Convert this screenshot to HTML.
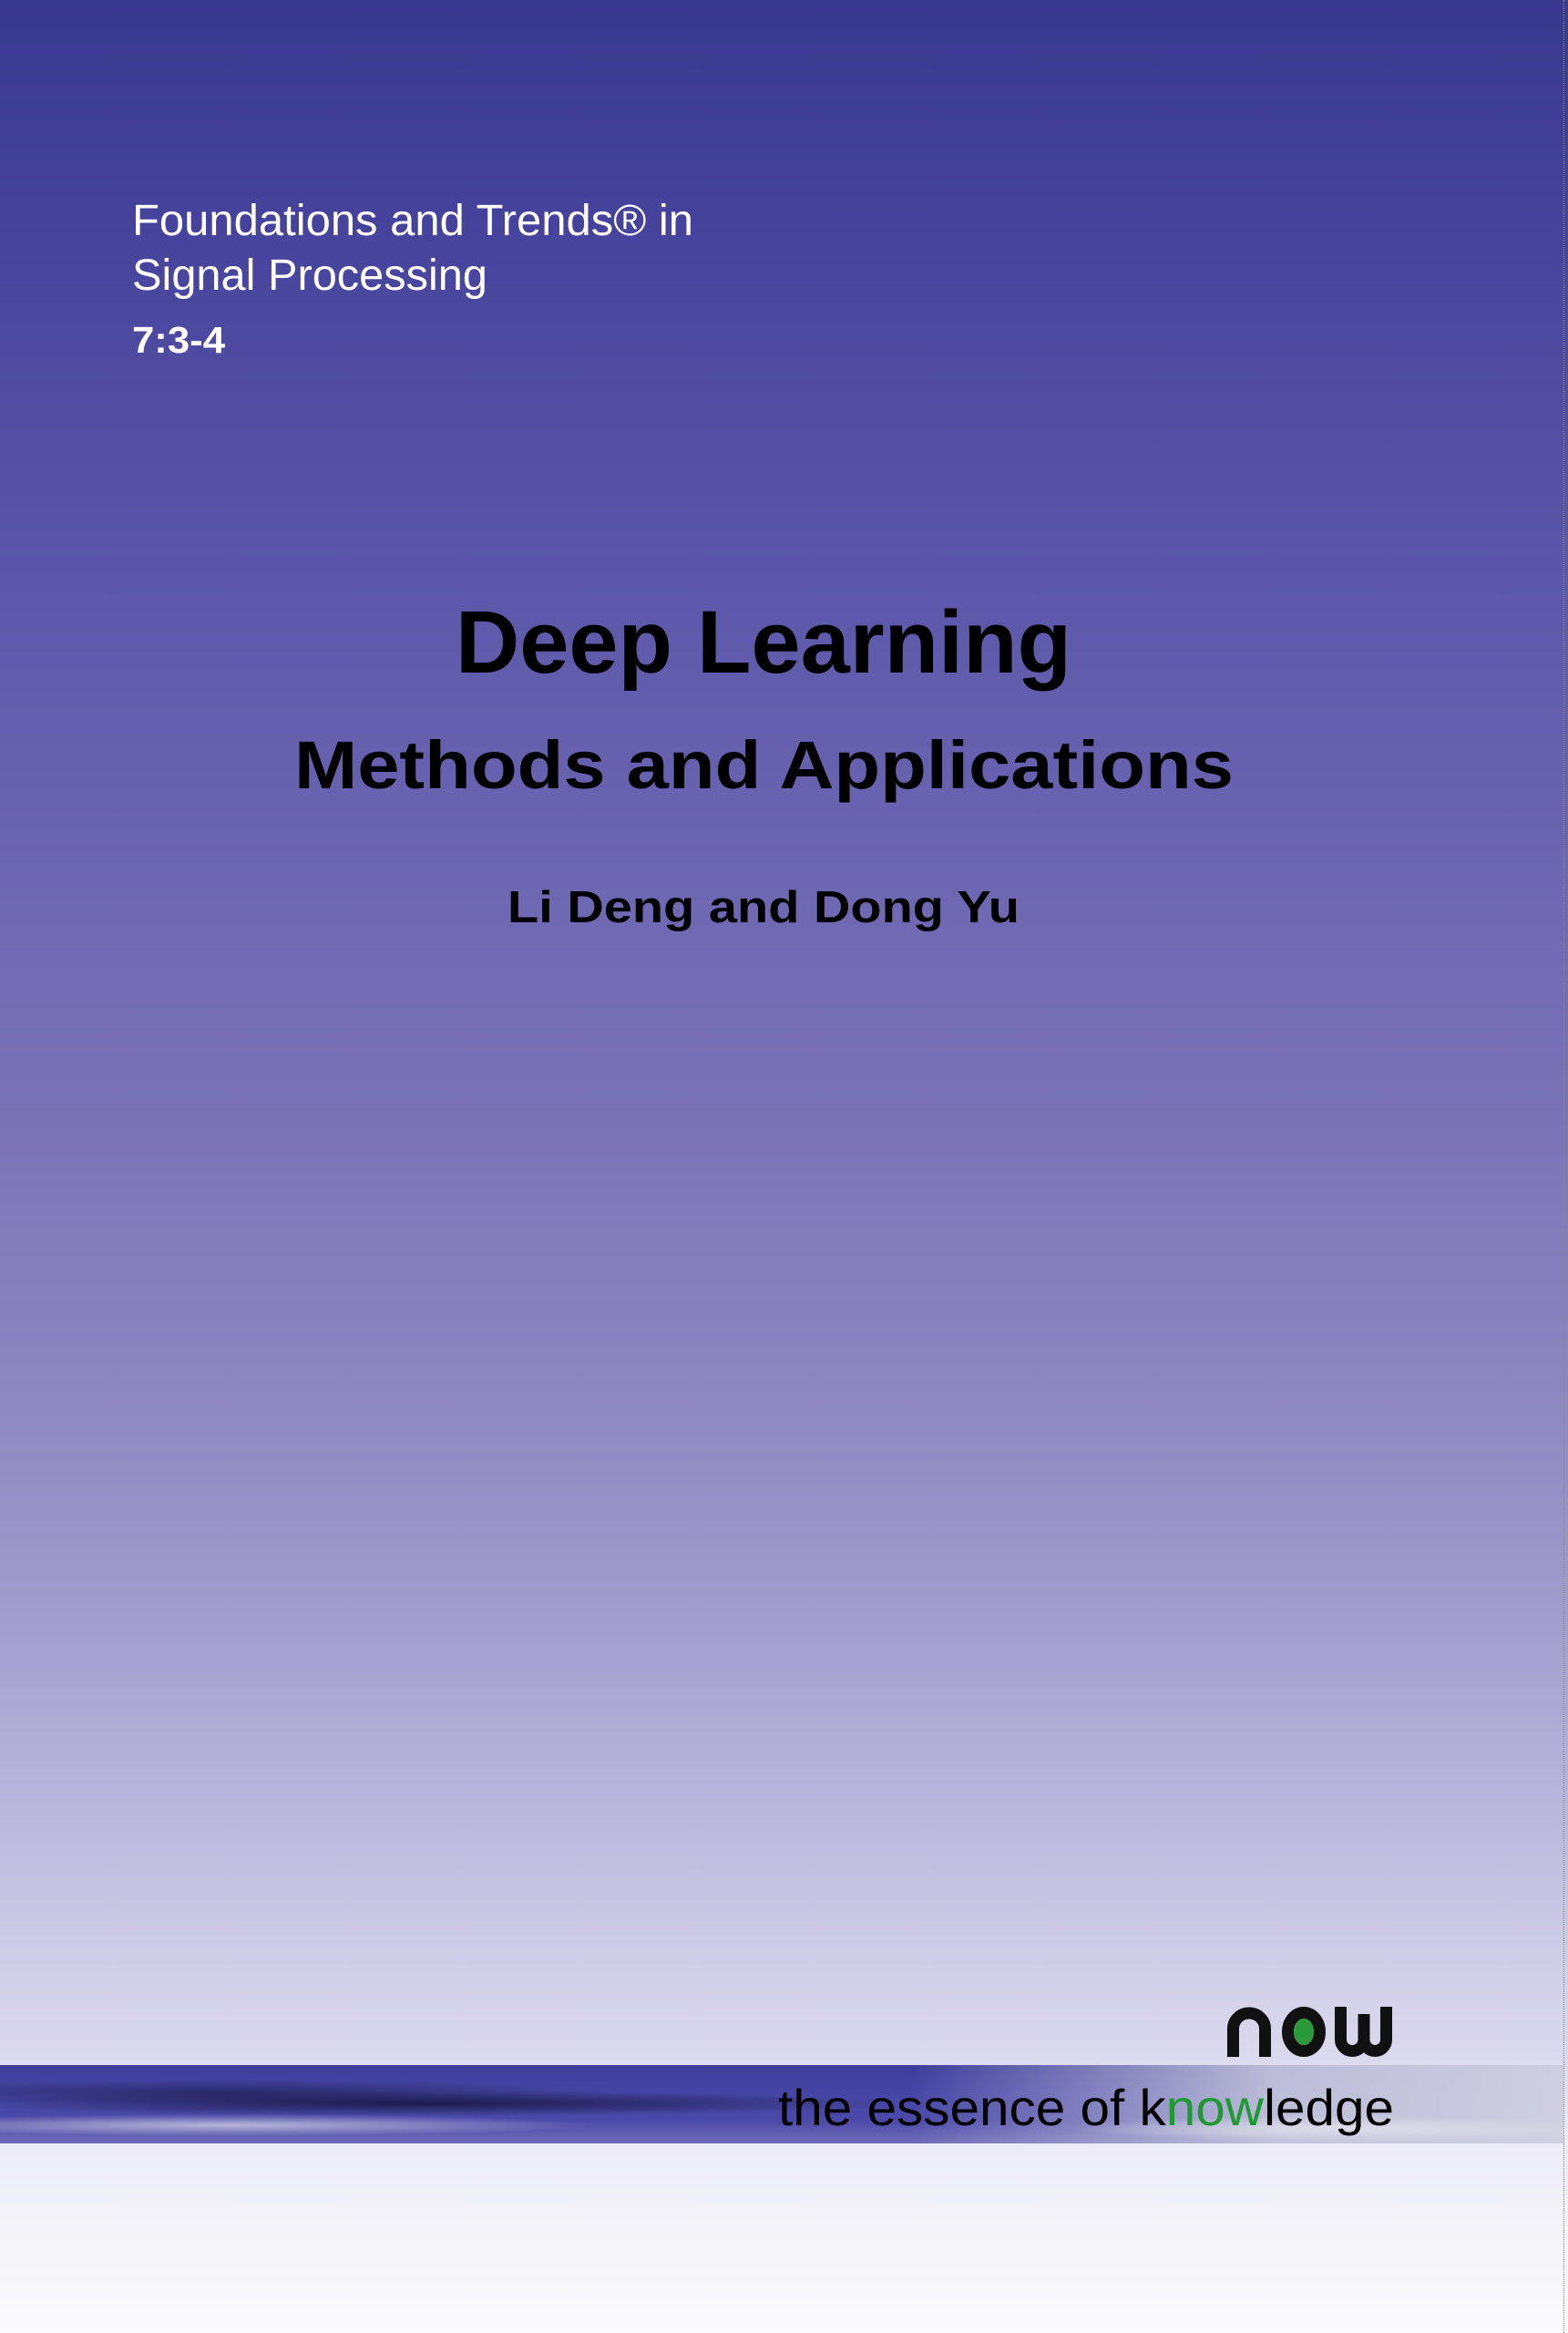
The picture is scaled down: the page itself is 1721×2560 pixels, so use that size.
<!DOCTYPE html>
<html><head><meta charset="utf-8"><style>
html,body{margin:0;padding:0}
body{width:1721px;height:2560px;overflow:hidden;position:relative;
background:linear-gradient(to bottom,#39388f 0px,#45439c 250px,#5753a6 550px,#6a63b1 900px,#7d74b7 1250px,#8f88c1 1550px,#a59fce 1800px,#bcb8dd 2000px,#d0cde7 2150px,#dcdaee 2265px,#ecebf5 2352px,#f4f4f9 2450px,#fbfbfd 2560px);}
#band{position:absolute;left:0;top:2266px;width:1716px;height:86px;
background:
radial-gradient(ellipse 520px 14px at 470px 42px,rgba(20,20,60,.85),rgba(20,20,60,0)),
radial-gradient(ellipse 420px 14px at 250px 30px,rgba(30,30,80,.7),rgba(30,30,80,0)),
radial-gradient(ellipse 400px 12px at 250px 66px,rgba(200,200,225,.85),rgba(200,200,225,0)),
radial-gradient(ellipse 300px 14px at 1480px 70px,rgba(225,225,235,.9),rgba(225,225,235,0)),
linear-gradient(to right,rgba(0,0,0,0) 0,rgba(0,0,0,0) 1000px,rgba(210,210,226,.85) 1400px,rgba(214,214,228,.95) 1716px),
linear-gradient(to bottom,#3e3d9a 0,#4746a6 40%,#4a49a8 70%,#6f6cb6 100%);}
#edge{position:absolute;right:4px;top:0;height:2560px;border-right:1px dotted #888}
svg{position:absolute;left:0;top:0}
</style></head><body>
<div id="band"></div>
<div id="edge"></div>
<svg width="1721" height="2560" xmlns="http://www.w3.org/2000/svg">
<g fill="#fff" font-family="Liberation Sans, sans-serif">
<text x="145" y="258" font-size="48" textLength="616" lengthAdjust="spacingAndGlyphs">Foundations and Trends® in</text>
<text x="145" y="318" font-size="48" textLength="390" lengthAdjust="spacingAndGlyphs">Signal Processing</text>
<text x="145" y="387" font-size="41" font-weight="bold" textLength="102" lengthAdjust="spacingAndGlyphs">7:3-4</text>
</g>
<g fill="#000" font-family="Liberation Sans, sans-serif" font-weight="bold">
<text x="500" y="738" font-size="97" textLength="676" lengthAdjust="spacingAndGlyphs">Deep Learning</text>
<text x="323" y="865" font-size="74" textLength="1031" lengthAdjust="spacingAndGlyphs">Methods and Applications</text>
<text x="557" y="1012" font-size="49" textLength="562" lengthAdjust="spacingAndGlyphs">Li Deng and Dong Yu</text>
</g>
<g fill="none" stroke="#111" stroke-width="13">
<path d="M1353.5 2257 V2226 A17.5 17 0 0 1 1388.5 2226 V2257"/>
<ellipse cx="1431" cy="2229.5" rx="17.5" ry="21"/>
<path d="M1471.5 2202 V2238 A12.75 12.5 0 0 0 1497 2238 A12.25 12.5 0 0 0 1521.5 2238 V2202 M1497 2210 V2238"/>
</g>
<ellipse cx="1431" cy="2229.5" rx="11" ry="14.5" fill="#2a9a3a"/>
<text x="854" y="2332" font-family="Liberation Sans, sans-serif" font-size="56" textLength="676" lengthAdjust="spacingAndGlyphs" fill="#000">the essence of k<tspan fill="#1f9a32">now</tspan>ledge</text>
</svg>
</body></html>
